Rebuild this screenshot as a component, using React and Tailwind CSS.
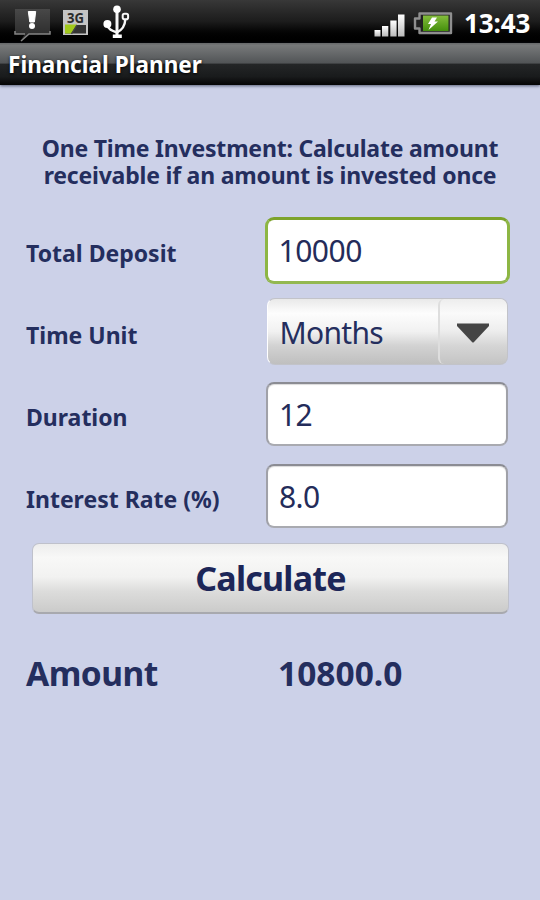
import React, { useState } from "react";

const UNITS = ["Months", "Years"];

const FIELD = "block w-[242px] h-[64px] rounded-[8px] bg-white border-2 border-t-[#8b8c93] border-x-[#a0a1a8] border-b-[#a9aab0] pl-[11px] text-[30px] tracking-[-0.6px] text-[#242c5a] outline-none shadow-[inset_0_1px_1px_rgba(0,0,0,0.15)]";
const FIELD_ACTIVE = "block w-[245px] h-[67px] rounded-[9px] bg-white border-[3px] border-t-[#7da32b] border-x-[#8db644] border-b-[#93b850] pl-[11px] text-[30px] tracking-[-0.5px] text-[#242c5a] outline-none";

function StatusBar() {
  return (
    <div className="flex items-center h-[43px] bg-linear-to-b from-[#383838] via-[#1c1c1c] to-[#000000]">
      {/* Warning bubble */}
      <svg className="ml-[13px]" width="38" height="42" viewBox="0 0 38 42">
        <defs>
          <linearGradient id="bubble" x1="0" y1="0" x2="0" y2="1">
            <stop offset="0" stopColor="#484848" />
            <stop offset="1" stopColor="#282828" />
          </linearGradient>
        </defs>
        <path d="M2 8H37V33H16L8 39L12 33H2Z" fill="url(#bubble)" />
        <path d="M2 30V33H12M8 40L16 33H37V30" stroke="#858585" strokeWidth="1.5" fill="none" />
        <path d="M15.3 10.5H22.7L21.4 21H16.8Z" fill="#fff" stroke="#fff" strokeWidth="1" strokeLinejoin="round" />
        <circle cx="19" cy="25" r="3" fill="#fff" />
      </svg>

      {/* 3G */}
      <svg className="ml-[11px]" width="26" height="42" viewBox="0 0 26 42">
        <rect x="1" y="9" width="25" height="25" fill="#c4c4c4" />
        <rect x="3" y="24" width="21" height="8.5" fill="#333" />
        <path d="M3 23.5H15L9 32.5H3Z" fill="#a2c91b" />
        <path d="M15 24L9.5 33" stroke="#444" strokeWidth="1.4" />
        <text x="13.5" y="21.5" textAnchor="middle" fontFamily="Noto Sans" fontWeight="700" fontSize="14.5" fill="#2b2b2b" textLength="17" lengthAdjust="spacingAndGlyphs">3G</text>
      </svg>

      {/* USB */}
      <svg className="ml-[13px]" width="32" height="42" viewBox="0 0 32 42" fill="none" stroke="#f7f7f7">
        <path d="M16 8V34" strokeWidth="3" />
        <path d="M6.5 24C7 28.5 11 30 16 31.5C21 29 24 25 24.3 18.5" strokeWidth="2.4" />
        <circle cx="16" cy="8.3" r="3.8" fill="#fff" stroke="none" />
        <circle cx="6.4" cy="23" r="4" fill="#fff" stroke="none" />
        <rect x="21.7" y="12.8" width="5.4" height="5.4" rx="1.8" strokeWidth="2" />
        <rect x="11.8" y="33.5" width="9" height="3.5" fill="#fff" stroke="none" />
      </svg>

      <div className="flex-1" />

      {/* Signal */}
      <svg width="32" height="42" viewBox="0 0 32 42">
        <defs>
          <linearGradient id="bars" x1="0" y1="0" x2="0" y2="1">
            <stop offset="0" stopColor="#ffffff" />
            <stop offset="1" stopColor="#b9b9b9" />
          </linearGradient>
        </defs>
        <rect x="0.5" y="29" width="6" height="6.5" fill="url(#bars)" />
        <rect x="8" y="25" width="6.3" height="10.5" fill="url(#bars)" />
        <rect x="16.3" y="19.5" width="6.3" height="16" fill="url(#bars)" />
        <rect x="24" y="13.5" width="6.5" height="22" fill="url(#bars)" />
      </svg>

      {/* Battery */}
      <svg className="ml-[6px]" width="42" height="42" viewBox="0 0 42 42">
        <defs>
          <linearGradient id="charge" x1="0" y1="0" x2="0" y2="1">
            <stop offset="0" stopColor="#84bd3c" />
            <stop offset="1" stopColor="#448f0c" />
          </linearGradient>
        </defs>
        <path d="M7.5 12.5H39V32H7.5V27.5H3V17.5H7.5Z" fill="#222" stroke="#8f8f8f" strokeWidth="2.4" strokeLinejoin="round" />
        <rect x="11" y="14.5" width="25.5" height="15.5" fill="url(#charge)" />
        <path d="M20 16.5H25L22.5 20.5H26L16.5 29L19 23H16Z" fill="#fff" />
      </svg>

      <span className="ml-[10px] mr-[10px] pt-[3px] w-[66px] text-[26px] leading-[40px] font-bold tracking-[-0.1px] text-white whitespace-nowrap">13:43</span>
    </div>
  );
}

function Row({ label, children }) {
  return (
    <div className="flex items-center h-[82px]">
      <label className="w-[252px] pl-[26px] pt-[6px] text-[23px] font-bold whitespace-nowrap">{label}</label>
      <div className="flex w-[270px] justify-center">{children}</div>
    </div>
  );
}

export default function App() {
  const [deposit, setDeposit]   = useState("10000");
  const [unit, setUnit]         = useState("Months");
  const [duration, setDuration] = useState("12");
  const [rate, setRate]         = useState("8.0");
  const [amount, setAmount]     = useState("10800.0");

  const nextUnit = () => setUnit(UNITS[(UNITS.indexOf(unit) + 1) % UNITS.length]);
  const calculate = () => {
    const years = unit === "Months" ? Number(duration) / 12 : Number(duration);
    const total = Number(deposit) * Math.pow(1 + Number(rate) / 100, years);
    setAmount((Math.round(total * 100) / 100).toFixed(1));
  };

  return (
    <div className="w-[540px] h-[900px] overflow-hidden bg-[#ccd1e8] font-['Noto_Sans','Open_Sans',sans-serif] text-[#242e5e]">
      <StatusBar />

      {/* Title bar */}
      <header className="h-[42px] bg-[linear-gradient(180deg,#666869_0%,#77797a_6%,#515456_48%,#242627_50%,#191b1c_80%,#040404_100%)] shadow-[0_1px_3px_rgba(40,45,70,0.7)]">
        <h1 className="pl-[8px] text-[22.5px] leading-[43px] font-bold tracking-[0.05px] text-white [text-shadow:0_1px_3px_#000]">Financial Planner</h1>
      </header>

      <main>
        <p className="pt-[50px] h-[123px] text-center text-[23px] leading-[27px] font-bold tracking-[-0.2px] whitespace-nowrap">
          One Time Investment: Calculate amount
          <br />
          receivable if an amount is invested once
        </p>

        <div className="pt-[1px]">
          <Row label="Total Deposit">
            <input className={FIELD_ACTIVE} value={deposit} onChange={e => setDeposit(e.target.value)} />
          </Row>
          <Row label="Time Unit">
            <button onClick={nextUnit} className="flex w-[241px] h-[67px] mb-[1px] rounded-[8px] border border-[#c2c3c9] border-l-white overflow-hidden bg-[linear-gradient(180deg,#e9e9e9_0%,#fdfdfd_22%,#f1f1f1_50%,#d2d2d2_72%,#bfbfbf_100%)] text-[30px] tracking-[-0.7px] text-[#242e5e]">
              <span className="flex-1 pl-[12px] pt-[13px] leading-[42px] text-left">{unit}</span>
              <span className="flex w-[69px] h-full items-center justify-center rounded-[6px] border-l-2 border-[#dedede] bg-[linear-gradient(180deg,#ededed_0%,#fafafa_22%,#eeeeee_48%,#d5d5d5_72%,#c4c4c4_100%)]">
                <svg className="mt-[3px]" width="34" height="20" viewBox="0 0 34 20">
                  <path d="M1 0.5H33V3L17.5 19.5H16.5L1 3Z" fill="#454545" />
                </svg>
              </span>
            </button>
          </Row>
          <Row label="Duration">
            <input className={FIELD} value={duration} onChange={e => setDuration(e.target.value)} />
          </Row>
          <Row label="Interest Rate (%)">
            <input className={FIELD} value={rate} onChange={e => setRate(e.target.value)} />
          </Row>
        </div>

        <button onClick={calculate} className="block ml-[32px] mt-[6px] w-[477px] h-[71px] rounded-[7px] border border-[#bfc1cb] border-b-2 border-b-[#a8a9ae] bg-[linear-gradient(180deg,#ededed_0%,#f8f8f7_20%,#f2f2f1_48%,#dcdcdb_70%,#cbcbca_100%)] text-[34px] font-bold tracking-[-0.8px] text-[#1c2658]">
          Calculate
        </button>

        <div className="flex mt-[34px] text-[33.5px] leading-[50px] font-bold">
          <span className="w-[278px] pl-[26px] tracking-[-0.5px]">Amount</span>
          <span>{amount}</span>
        </div>
      </main>
    </div>
  );
}
